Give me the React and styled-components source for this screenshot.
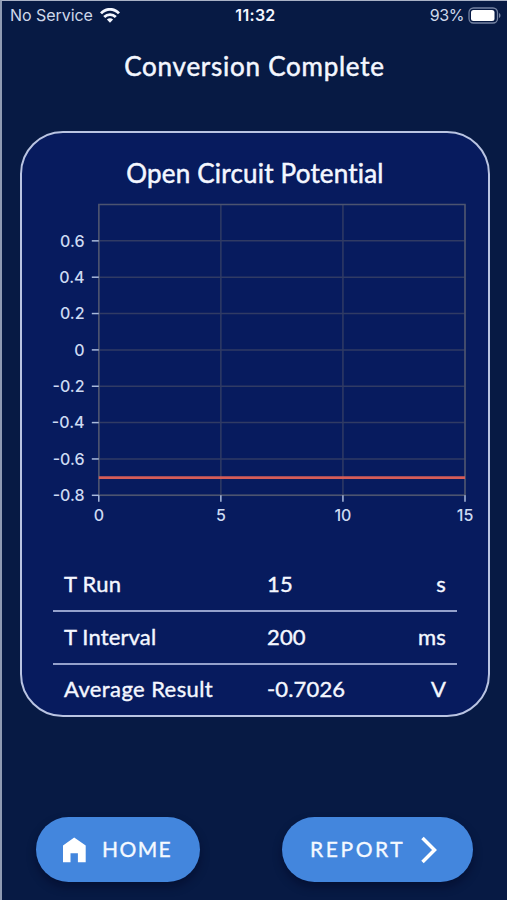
import React from 'react';
import styled, { createGlobalStyle } from 'styled-components';

const GlobalStyle = createGlobalStyle`
  * {
    box-sizing: border-box;
  }

  body {
    margin: 0;
    background-color: #071a44;
  }
`;

const Screen = styled.div`
  display: flex;
  flex-direction: column;
  width: 507px;
  height: 900px;
  overflow: hidden;
  border-top: 1px solid #a9b2c6;
  border-left: 2px solid #8f9bb3;
  background-color: #071a44;
  color: #f4f7ff;
  font-family: Lato, 'Open Sans', sans-serif;
`;

const StatusBar = styled.header`
  display: grid;
  grid-template-columns: 1fr auto 1fr;
  align-items: center;
  height: 28px;
  padding: 0 6px 0 8px;
  font-family: Inter, sans-serif;
  font-size: 16px;
  color: #cfd8ea;
`;

const StatusGroup = styled.div`
  display: flex;
  align-items: center;
  justify-content: ${props => (props.$end ? 'flex-end' : 'flex-start')};
  gap: ${props => (props.$end ? '4px' : '7px')};
  letter-spacing: ${props => (props.$end ? '-0.4px' : '-0.05px')};
`;

const Clock = styled.time`
  font-weight: 600;
  letter-spacing: 0.3px;
  color: #f4f7ff;
`;

const Title = styled.h1`
  margin: 21px 0 0;
  height: 32px;
  line-height: 32px;
  text-align: center;
  font-size: 26px;
  font-weight: 400;
  letter-spacing: 0.75px;
  -webkit-text-stroke: 0.5px currentColor;
`;

const Card = styled.section`
  display: flex;
  flex-direction: column;
  flex-shrink: 0;
  width: 470px;
  height: 586px;
  margin: 49px 0 0 18px;
  border: 2px solid #b9c4e2;
  border-radius: 43px;
  background-color: #071b5e;
`;

const CardTitle = styled.h2`
  margin: 24px 0 0;
  height: 32px;
  line-height: 32px;
  text-align: center;
  font-size: 26px;
  font-weight: 400;
  letter-spacing: 0.2px;
  -webkit-text-stroke: 0.5px currentColor;
`;

const ChartSvg = styled.svg`
  display: block;
  flex-shrink: 0;
  width: 466px;
  height: 341px;
  font-family: Inter, sans-serif;
  font-size: 16px;
  font-weight: 500;
`;

const ResultList = styled.dl`
  margin: 29px 31px 0;
`;

const ResultRow = styled.div`
  display: grid;
  grid-template-columns: 203px 1fr auto;
  align-items: center;
  height: 53px;
  padding: 0 11px 3px;
  font-size: 22px;
  -webkit-text-stroke: 0.4px currentColor;

  &:not(:last-child) {
    border-bottom: 2px solid #94a1cc;
  }

  &:last-child {
    height: 50px;
  }
`;

const ResultLabel = styled.dt`
  letter-spacing: ${props => props.$spacing};
`;

const ResultValue = styled.dd`
  margin: 0;
  letter-spacing: 0.15px;
`;

const Actions = styled.footer`
  display: flex;
  justify-content: space-between;
  margin-top: 100px;
  padding: 0 34px;
`;

const PillButton = styled.button`
  display: flex;
  align-items: center;
  gap: ${props => props.$gap};
  width: ${props => props.$width};
  height: 65px;
  padding: 0 0 0 ${props => props.$inset};
  border: 0;
  border-radius: 33px;
  background-color: #4386dd;
  box-shadow: 0 5px 10px rgba(0, 5, 30, 0.45);
  color: #f4f9ff;
  font-family: inherit;
  font-size: 21px;
  letter-spacing: ${props => props.$spacing};
  -webkit-text-stroke: 0.35px currentColor;

  svg {
    flex-shrink: 0;
  }
`;

const ButtonText = styled.span`
  padding-bottom: 2px;
`;

const RESULTS = [
  { label: 'T Run', value: '15', unit: 's', spacing: '0.3px' },
  { label: 'T Interval', value: '200', unit: 'ms', spacing: '0.15px' },
  { label: 'Average Result', value: '-0.7026', unit: 'V', spacing: '0.4px' },
];

const PLOT = { left: 76.8, right: 443, top: 15.5, bottom: 306.3 };
const X_TICKS = [0, 5, 10, 15];
const Y_TICKS = [0.6, 0.4, 0.2, 0, -0.2, -0.4, -0.6, -0.8];

const scaleX = value => PLOT.left + (value / 15) * (PLOT.right - PLOT.left);
const scaleY = value => PLOT.top + ((0.8 - value) / 1.6) * (PLOT.bottom - PLOT.top);

const WifiIcon = () => (
  <svg width="20" height="15" viewBox="0 0 20 15" aria-hidden="true">
    <g fill="none" stroke="#f4f7ff" strokeWidth="2.8">
      <path d="M1 5.4C6-.1 14-.1 19 5.4" />
      <path d="M4.2 9.1c3.3-3.3 8.3-3.3 11.6 0" />
    </g>
    <path fill="#f4f7ff" d="M6.9 11.5c1.8-1.6 4.4-1.6 6.2 0L10 14.7z" />
  </svg>
);

const BatteryIcon = () => (
  <svg width="33" height="17" viewBox="0 0 33 17" aria-hidden="true">
    <rect x="1" y="1" width="28.5" height="15" rx="4.5" fill="none" stroke="#7583a2" strokeWidth="1.3" />
    <rect x="3" y="3" width="23.5" height="11" rx="2.5" fill="#fff" />
    <path d="M31 6v5c2-.8 2-4.2 0-5z" fill="#7583a2" />
  </svg>
);

const HomeIcon = () => (
  <svg width="24" height="26" viewBox="0 0 24 26" aria-hidden="true">
    <path fill="#fff" d="M12.2 .5 23.7 8.5V25.3H15.9V16.3H8.5V25.3H1V8.5z" />
  </svg>
);

const ChevronIcon = () => (
  <svg width="18" height="28" viewBox="0 0 18 28" aria-hidden="true">
    <path d="M2.5 2 14.5 14 2.5 26" fill="none" stroke="#fff" strokeWidth="3.5" />
  </svg>
);

const PotentialChart = () => (
  <ChartSvg viewBox="0 0 466 341" role="img" aria-label="Open Circuit Potential">
    <g stroke="#303b64" strokeWidth="1.5">
      {Y_TICKS.map(tick => (
        <line key={tick} x1={PLOT.left} x2={PLOT.right} y1={scaleY(tick)} y2={scaleY(tick)} />
      ))}
      {X_TICKS.map(tick => (
        <line key={tick} x1={scaleX(tick)} x2={scaleX(tick)} y1={PLOT.top} y2={PLOT.bottom} />
      ))}
    </g>
    <rect
      x={PLOT.left}
      y={PLOT.top}
      width={PLOT.right - PLOT.left}
      height={PLOT.bottom - PLOT.top}
      fill="none"
      stroke="#4c5470"
      strokeWidth="1.5"
    />
    <g stroke="#a9b9da" strokeWidth="1.5">
      {Y_TICKS.map(tick => (
        <line key={tick} x1={PLOT.left - 7} x2={PLOT.left} y1={scaleY(tick)} y2={scaleY(tick)} />
      ))}
      {X_TICKS.map(tick => (
        <line key={tick} x1={scaleX(tick)} x2={scaleX(tick)} y1={PLOT.bottom} y2={PLOT.bottom + 6.5} />
      ))}
    </g>
    <line
      x1={PLOT.left}
      x2={PLOT.right}
      y1={scaleY(-0.7026)}
      y2={scaleY(-0.7026)}
      stroke="#d65d58"
      strokeWidth="2.8"
    />
    <g fill="#cddaf2">
      {Y_TICKS.map(tick => (
        <text key={tick} x="62.5" y={scaleY(tick) + 5.7} textAnchor="end">{tick}</text>
      ))}
      {X_TICKS.map(tick => (
        <text key={tick} x={scaleX(tick)} y={PLOT.bottom + 26} textAnchor="middle">{tick}</text>
      ))}
    </g>
  </ChartSvg>
);

const App = () => (
  <>
    <GlobalStyle />
    <Screen>
      <StatusBar>
        <StatusGroup>
          No Service
          <WifiIcon />
        </StatusGroup>
        <Clock>11:32</Clock>
        <StatusGroup $end>
          93%
          <BatteryIcon />
        </StatusGroup>
      </StatusBar>
      <Title>Conversion Complete</Title>
      <Card>
        <CardTitle>Open Circuit Potential</CardTitle>
        <PotentialChart />
        <ResultList>
          {RESULTS.map(({ label, value, unit, spacing }) => (
            <ResultRow key={label}>
              <ResultLabel $spacing={spacing}>{label}</ResultLabel>
              <ResultValue>{value}</ResultValue>
              <ResultValue>{unit}</ResultValue>
            </ResultRow>
          ))}
        </ResultList>
      </Card>
      <Actions>
        <PillButton $width="164px" $inset="26px" $gap="16px" $spacing="1.4px">
          <HomeIcon />
          <ButtonText>HOME</ButtonText>
        </PillButton>
        <PillButton $width="191px" $inset="28px" $gap="15px" $spacing="2.6px">
          <ButtonText>REPORT</ButtonText>
          <ChevronIcon />
        </PillButton>
      </Actions>
    </Screen>
  </>
);

export default App;
